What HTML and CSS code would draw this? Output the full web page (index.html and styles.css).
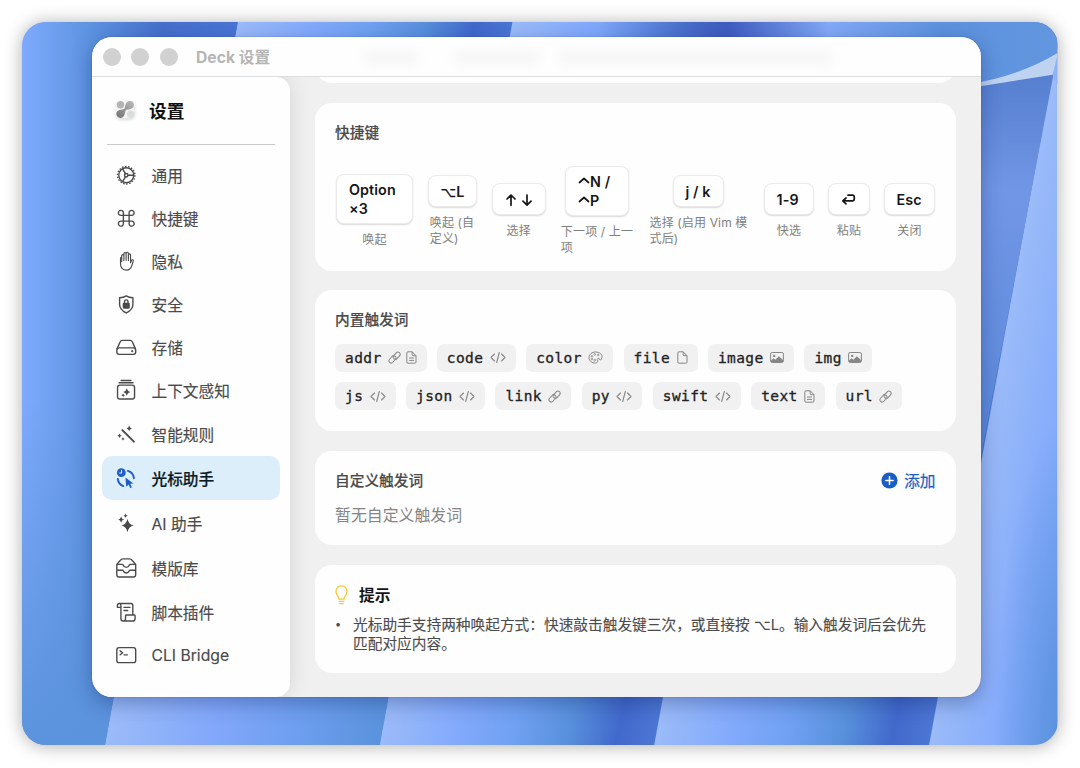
FILE: index.html
```html
<!DOCTYPE html>
<html lang="zh-CN">
<head>
<meta charset="utf-8">
<title>Deck 设置</title>
<link rel="stylesheet" href="styles.css">
</head>
<body>
<svg class="defs" width="0" height="0">
  <symbol id="i-link" viewBox="0 0 14 14"><g fill="none" stroke="currentColor" stroke-width="1.1" transform="rotate(-48 7 7)"><rect x="-.4" y="4.300" width="8.800" height="4.800" rx="2.400"/><rect x="5.600" y="5" width="8.800" height="4.800" rx="2.400"/></g></symbol>
  <symbol id="i-doc" viewBox="0 0 11 13"><path d="M2 .8h4.200L10 4.700V11a1.200 1.200 0 0 1-1.200 1.200H2A1.200 1.200 0 0 1 .8 11V2A1.200 1.200 0 0 1 2 .8zM6.200.8v3a.9.9 0 0 0 .9.9H10M3 7h5M3 9.400h5" fill="none" stroke="currentColor"/></symbol>
  <symbol id="i-file" viewBox="0 0 11 13"><path d="M2 .8h4.200L10 4.700V11a1.200 1.200 0 0 1-1.200 1.200H2A1.200 1.200 0 0 1 .8 11V2A1.200 1.200 0 0 1 2 .8zM6.200.8v3a.9.9 0 0 0 .9.9H10" fill="none" stroke="currentColor"/></symbol>
  <symbol id="i-code" viewBox="0 0 16 12"><path d="M4.500 2.500 1 6l3.500 3.500M11.500 2.500 15 6l-3.500 3.500M9.300 1 6.700 11" fill="none" stroke="currentColor" stroke-width="1.100" stroke-linecap="round" stroke-linejoin="round"/></symbol>
  <symbol id="i-image" viewBox="0 0 14 12"><rect x=".6" y="1" width="12.800" height="10" rx="1.600" fill="none" stroke="currentColor"/><circle cx="4.200" cy="4.400" r="1.200" fill="currentColor"/><path d="M1 10.500V9l2.500-2.200 1.800 1.400 3.500-3.400L13 8.500v2z" fill="currentColor"/></symbol>
  <symbol id="i-palette" viewBox="0 0 15 13"><path d="M10.600 7.300c-1.500.2-1.700 1-1.100 2 .7 1.100.1 2.500-1.800 2.700C3.800 12.300 1 9.800 1 6.700 1 3.300 4 1 7.600 1c3.700 0 6.400 2 6.400 4.600 0 1.900-.9 3.600-2 3.400-.9-.2-.4-1.900-1.400-1.700z" fill="none" stroke="currentColor"/><g fill="none" stroke="currentColor" stroke-width=".8"><circle cx="4" cy="5.300" r=".8"/><circle cx="6.800" cy="3.400" r=".8"/><circle cx="10.200" cy="4" r=".8"/><circle cx="3.900" cy="8" r=".8"/><circle cx="6.700" cy="9.200" r=".9"/></g></symbol>
</svg>

<div class="desktop">
  <svg class="wallpaper" viewBox="22 22 1036 723" preserveAspectRatio="none">
    <defs>
      <linearGradient id="bands" gradientUnits="userSpaceOnUse" x1="105" y1="745" x2="371" y2="794" spreadMethod="repeat">
        <stop offset="0" stop-color="#9bbbf8"/><stop offset=".27" stop-color="#83aafc"/><stop offset=".48" stop-color="#70a1f2"/><stop offset=".68" stop-color="#5890dc"/><stop offset=".86" stop-color="#4169cc"/><stop offset=".996" stop-color="#4c76d4"/><stop offset="1" stop-color="#9bbbf8"/>
      </linearGradient>
      <linearGradient id="first" gradientUnits="userSpaceOnUse" x1="105" y1="745" x2="371" y2="794">
        <stop offset="0" stop-color="#9bbbf8"/><stop offset=".38" stop-color="#83a8fb"/><stop offset=".7" stop-color="#6d9eef"/><stop offset="1" stop-color="#5a92dc"/>
      </linearGradient>
      <linearGradient id="left" gradientUnits="userSpaceOnUse" x1="22" y1="0" x2="238" y2="0"><stop offset="0" stop-color="#7faafd"/><stop offset=".33" stop-color="#5b92df"/><stop offset=".65" stop-color="#4670cc"/><stop offset="1" stop-color="#4a74d4"/></linearGradient>
      <linearGradient id="leftfoot" x1="0" y1="0" x2="0" y2="1"><stop offset="0" stop-color="#5b93dc" stop-opacity="0"/><stop offset="1" stop-color="#5b93dc"/></linearGradient>
      <linearGradient id="pane" x1="0" y1="0" x2="0" y2="1"><stop offset="0" stop-color="#567fd0"/><stop offset=".3" stop-color="#7196e5"/><stop offset="1" stop-color="#5a88da"/></linearGradient>
      <linearGradient id="corner" x1="0" x2="1"><stop offset="0" stop-color="#3f5cc0" stop-opacity="0"/><stop offset=".28" stop-color="#3f5cc0"/><stop offset=".5" stop-color="#82a9f7"/><stop offset=".75" stop-color="#5d92dd"/><stop offset="1" stop-color="#6296df"/></linearGradient>
      <radialGradient id="edge" gradientUnits="userSpaceOnUse" cx="0" cy="0" r="1" gradientTransform="translate(1070 745) scale(75 330)"><stop offset="0" stop-color="#568fda"/><stop offset="1" stop-color="#5a91dc" stop-opacity="0"/></radialGradient>
    </defs>
    <rect x="22" y="22" width="1036" height="723" fill="url(#bands)"/>
    <path d="M105 745L114 696H389L380 745z" fill="url(#first)"/>
    <path d="M22 22h216L105 745H22z" fill="url(#left)"/>
    <path d="M22 400h146L105 745H22z" fill="url(#leftfoot)"/>
    <path d="M600 22h458v34q-30 18-78 28H600z" fill="url(#corner)"/>
    <path d="M975 86l79-12-74 390z" fill="url(#pane)"/>
    <path d="M970 84q50-8 88-31v21l-88 14z" fill="#bdd3ef"/>
    <path d="M1053 75l5-20v30z" fill="#8fb3f8"/>
    <rect x="980" y="410" width="78" height="335" fill="url(#edge)"/>
  </svg>

  <div class="window">
    <header class="titlebar">
      <span class="dot"></span><span class="dot"></span><span class="dot"></span>
      <span class="title">Deck 设置</span>
      <span class="ghost ghost-a"></span><span class="ghost ghost-b"></span><span class="ghost ghost-c"></span>
    </header>

    <div class="body">
      <aside class="sidebar">
        <div class="brand">
          <svg width="26" height="26" viewBox="0 0 26 26">
            <defs><filter id="soft" x="-40%" y="-40%" width="180%" height="180%"><feGaussianBlur stdDeviation="1.500"/></filter>
            <linearGradient id="petal" x1="0" y1="1" x2="1" y2="0"><stop offset="0" stop-color="#6f6f6f"/><stop offset="1" stop-color="#bdbdbd"/></linearGradient></defs>
            <rect x="4" y="5" width="19" height="18" rx="5" fill="#d9dddc" filter="url(#soft)"/>
            <rect x="4" y="4" width="18" height="17" rx="5" fill="#f3f4f4"/>
            <circle cx="8.500" cy="7.800" r="3.700" fill="#b5b5b5"/>
            <path d="M13 10c.5-3.500 2.200-6 5-6 2.400 0 3.900 1.700 3.900 3.900 0 3.600-3.600 4.400-6.400 4.700-1.700.2-2 1-2.400 3-.5 3.300-2 5.400-4.600 5.400A4 4 0 0 1 4.400 17c0-3 2.600-4.100 5.600-4.400 2-.2 2.800-.8 3-2.600z" fill="url(#petal)"/>
            <circle cx="18.500" cy="17.200" r="3.600" fill="#d9dcdb"/>
          </svg>
          <span>设置</span>
        </div>
        <nav class="nav">
          <a class="item"><svg class="ico" viewBox="0 0 20 20"><circle cx="10" cy="10" r="7.300"/><circle cx="10" cy="10" r="8.500" stroke-width="1.300" stroke-linecap="butt" stroke-dasharray="1.500 1.467"/><circle cx="10" cy="10" r="1.700"/><path d="M11.700 10h5.500M9.200 8.500 6.400 3.700M9.200 11.500l-2.800 4.800"/></svg>通用</a>
          <a class="item"><svg class="ico" viewBox="0 0 20 20"><path d="M7.200 7.200h5.600v5.600H7.200zM7.200 7.200H4.900a2.450 2.450 0 1 1 2.300-2.400zM12.800 7.200V4.800a2.450 2.450 0 1 1 2.300 2.400zM12.800 12.800h2.300a2.450 2.450 0 1 1-2.300 2.400zM7.200 12.800v2.400a2.450 2.450 0 1 1-2.300-2.400z"/></svg>快捷键</a>
          <a class="item"><svg class="ico thin" viewBox="0 0 20 20"><path d="M5.600 10.500V4.600a1.050 1.050 0 0 1 2.100 0V9.200M7.700 9V2.700a1.100 1.100 0 0 1 2.200 0V9M9.900 9V2.300a1.100 1.100 0 0 1 2.200 0V9.200M12.100 9V3.900a1.050 1.050 0 0 1 2.100 0v7.500l1-2.300c.5-1 2-.7 1.700.6l-1.500 4.700c-.9 2.700-2.600 4.200-5.100 4.200-3.300 0-5.900-1.900-5.900-6V6.900a1 1 0 0 1 1.200-.9"/></svg>隐私</a>
          <a class="item"><svg class="ico" viewBox="0 0 20 20"><path d="M10 1.800c1.800 1.200 4.200 1.800 6.500 1.900v6.500c0 3.900-2.700 6.300-6.500 8.300-3.800-2-6.500-4.400-6.500-8.300V3.700C5.800 3.600 8.200 3 10 1.800z"/><rect x="7.200" y="9.200" width="5.600" height="4.400" rx=".6" class="solid"/><path d="M8.300 9V7.400a1.700 1.700 0 0 1 3.400 0V9"/></svg>安全</a>
          <a class="item"><svg class="ico" viewBox="0 0 20 20"><path d="M1 11.600 4 4.900q.6-1.600 2.200-1.600h7.600q1.600 0 2.200 1.600l3 6.700"/><rect x=".8" y="10.600" width="18.400" height="6.400" rx="2.300"/><circle cx="15.800" cy="13.800" r=".4"/></svg>存储</a>
          <a class="item"><svg class="ico" viewBox="0 0 20 20"><rect x="1.500" y="5" width="16.600" height="13.600" rx="2.300"/><path d="M3 2.700h13.600M5 .5h9.600" /><path class="solid" stroke="none" d="M10.500 8q.5 3 3.500 3.700-3 .7-3.500 3.700-.6-3-3.500-3.700 2.900-.7 3.500-3.700zM7 13.200q.3 1.300 1.700 1.700-1.400.4-1.700 1.700-.4-1.300-1.700-1.700 1.300-.4 1.700-1.700z"/></svg>上下文感知</a>
          <a class="item"><svg class="ico" viewBox="0 0 20 20"><path d="M6.200 6 17.500 17.200" stroke-width="1.900"/><path class="solid" stroke="none" d="M12.900 1.500q.4 2.300 2.600 2.800-2.200.5-2.600 2.800-.5-2.300-2.700-2.800 2.200-.5 2.700-2.800zM3.500 9.200q.4 1.800 2.100 2.200-1.700.4-2.100 2.200-.4-1.800-2.200-2.200 1.800-.4 2.200-2.200zM6.800 13q.3 1.300 1.600 1.600-1.300.3-1.600 1.600-.3-1.300-1.600-1.600 1.300-.3 1.600-1.600z"/></svg>智能规则</a>
          <a class="item active"><svg class="ico" viewBox="0 0 20 20"><circle cx="5.200" cy="4.600" r="4.300" class="solid" stroke="none"/><path d="M5.400 2.200v2.600H3.500" stroke="#dceefa" stroke-width="1"/><path d="M11.500 2.800q5.300 1.400 6 7.100M1.800 10.600q.5 5.200 5.300 7" stroke-width="1.900"/><path class="solid" stroke="none" d="M9.200 9.200 17 15l-3.100.4 1.600 3.500-1.500.8-1.700-3.600-2.300 2.100z"/></svg>光标助手</a>
          <a class="item"><svg class="ico" viewBox="0 0 20 20"><path class="solid" stroke="none" d="M11.200 5.500q1 5.600 6 6.600-5 1-6 6.600-1-5.600-6-6.600 5-1 6-6.600zM5 3.300q.5 2.600 3 3.100-2.500.5-3 3.100-.5-2.600-3-3.100 2.500-.5 3-3.100zM9.300.6q.3 1.700 2 2-1.700.3-2 2-.3-1.700-2-2 1.700-.3 2-2z"/></svg>AI 助手</a>
          <a class="item"><svg class="ico" viewBox="0 0 20 20"><path d="M.8 6.200v10.200q0 2.200 2.200 2.200h14q2.200 0 2.200-2.200V6.200L15.700 2.200q-1-1.300-2.700-1.300H7q-1.700 0-2.700 1.300zM.8 6.200h5.700c.5 0 .5 3 3.500 3s3-3 3.500-3h5.700M.8 12h5.800c.5 0 .4 2.600 3.400 2.600s2.900-2.600 3.400-2.600h5.800"/></svg>模版库</a>
          <a class="item"><svg class="ico" viewBox="0 0 20 20"><path d="M4.600 5.300H1.400V3.500q0-2.100 2-2.100h11q2 0 2 2v9.200M3.200 1.400q1.600.2 1.600 2.300v12.600q0 2.300 2.300 2.300H16q2.600 0 2.600-2.600v-2.600q0-.7-.8-.7H10q-.7 0-.7.7V16q0 2.600-2.200 2.600M7.800 5.300h5.800M7.800 8.300h3.600"/></svg>脚本插件</a>
          <a class="item"><svg class="ico" viewBox="0 0 20 20"><rect x=".8" y="2.600" width="18.400" height="14.600" rx="2.200"/><path d="M4 5.700l2.500 1.900L4 9.500M7.800 9.600h3.300"/></svg>CLI Bridge</a>
        </nav>
      </aside>

      <main class="content">
        <section class="card sliver"></section>

        <section class="card shortcuts">
          <h2>快捷键</h2>
          <div class="keys">
            <div class="combo w1"><kbd>Option<br>×3</kbd><small>唤起</small></div>
            <div class="combo w2"><kbd><span class="sym">⌥</span>L</kbd><small>唤起 (自<br>定义)</small></div>
            <div class="combo w3"><kbd><svg width="28" height="14" viewBox="0 0 28 14"><path d="M6 12.200V2.200M2 6 6 2l4 4M22 2v10M18 8.200l4 4 4-4"/></svg></kbd><small>选择</small></div>
            <div class="combo w4"><kbd><svg class="ctl" width="12" height="13" viewBox="0 0 12 13"><path d="M1.500 6.500 6 2.500l4.500 4"/></svg>N /<br><svg class="ctl" width="12" height="13" viewBox="0 0 12 13"><path d="M1.500 6.500 6 2.500l4.500 4"/></svg>P</kbd><small>下一项 / 上一<br>项</small></div>
            <div class="combo w5"><kbd>j / k</kbd><small>选择 (启用 Vim 模<br>式后)</small></div>
            <div class="combo w6"><kbd>1-9</kbd><small>快选</small></div>
            <div class="combo w7"><kbd><svg width="15" height="14" viewBox="0 0 15 14"><path d="M7 2.200h4.200Q13.300 2.200 13.300 4.300v1.500q0 2.100-2.100 2.100H2M5 5 1.800 7.900 5 10.900"/></svg></kbd><small>粘贴</small></div>
            <div class="combo w8"><kbd>Esc</kbd><small>关闭</small></div>
          </div>
        </section>

        <section class="card triggers">
          <h2>内置触发词</h2>
          <div class="tags">
            <span class="tag">addr<svg class="g13"><use href="#i-link"/></svg><svg class="g11"><use href="#i-doc"/></svg></span>
            <span class="tag">code<svg class="g16"><use href="#i-code"/></svg></span>
            <span class="tag">color<svg class="g15"><use href="#i-palette"/></svg></span>
            <span class="tag">file<svg class="g11"><use href="#i-file"/></svg></span>
            <span class="tag">image<svg class="g14"><use href="#i-image"/></svg></span>
            <span class="tag">img<svg class="g14"><use href="#i-image"/></svg></span>
            <span class="tag">js<svg class="g16"><use href="#i-code"/></svg></span>
            <span class="tag">json<svg class="g16"><use href="#i-code"/></svg></span>
            <span class="tag">link<svg class="g13"><use href="#i-link"/></svg></span>
            <span class="tag">py<svg class="g16"><use href="#i-code"/></svg></span>
            <span class="tag">swift<svg class="g16"><use href="#i-code"/></svg></span>
            <span class="tag">text<svg class="g11"><use href="#i-doc"/></svg></span>
            <span class="tag">url<svg class="g13"><use href="#i-link"/></svg></span>
          </div>
        </section>

        <section class="card custom">
          <div class="row">
            <h2>自定义触发词</h2>
            <a class="add"><svg width="17" height="17" viewBox="0 0 17 17"><circle cx="8.500" cy="8.500" r="8.100" fill="#1b5dc4"/><path d="M8.500 4.800v7.400M4.800 8.500h7.400" stroke="#fff" stroke-width="1.500" stroke-linecap="round"/></svg>添加</a>
          </div>
          <p class="empty">暂无自定义触发词</p>
        </section>

        <section class="card tips">
          <h3><svg width="13" height="20" viewBox="0 0 13 20"><path d="M4 14.200C4 11.300 1 10 1 6.300a5.500 5.500 0 0 1 11 0c0 3.700-3 5-3 7.900zM4.200 16.400h4.600M4.800 18.600h3.400" fill="none" stroke="#f6c92f" stroke-width="1.300" stroke-linecap="round" stroke-linejoin="round"/></svg>提示</h3>
          <div class="tip"><span class="bullet">•</span><p>光标助手支持两种唤起方式：快速敲击触发键三次，或直接按 <span class="sym">⌥</span>L。输入触发词后会优先<br>匹配对应内容。</p></div>
        </section>
      </main>
    </div>
  </div>
</div>
</body>
</html>
```
FILE: styles.css
```css
* { box-sizing: border-box; }
body {
  margin: 0;
  width: 1080px;
  height: 768px;
  padding: 22px 22.500px 23px 22px;
  overflow: hidden;
  background: #fff;
  font-family: Inter, "Noto Sans CJK SC", sans-serif;
  color: #4a4a4a;
}
.defs { position: absolute; }
h2, h3, p { margin: 0; }

.desktop {
  position: relative;
  height: 723px;
  padding: 15px 77px 48px 70px;
  border-radius: 24px;
  box-shadow: 0 1px 18px rgba(0, 0, 0, .32);
}
.wallpaper {
  position: absolute;
  inset: 0;
  width: 100%;
  height: 100%;
  border-radius: 24px;
}
.window {
  position: relative;
  display: flex;
  flex-direction: column;
  height: 660px;
  border-radius: 20px;
  overflow: hidden;
  background: #f0f0f0;
  box-shadow: 0 0 1px rgba(0, 0, 0, .5), 0 6px 20px rgba(10, 30, 90, .34);
}

.titlebar {
  position: relative;
  display: flex;
  align-items: center;
  flex: none;
  height: 40px;
  padding-left: 10.500px;
  gap: 10.500px;
  background: #fefefe;
  border-bottom: 1px solid #dedede;
}
.dot { width: 18px; height: 18px; border-radius: 50%; background: #d1d1d1; }
.title { margin-left: 8px; font-size: 15.700px; font-weight: 700; color: #b5b5b5; }
.ghost {
  position: absolute;
  top: 14px;
  height: 14px;
  border-radius: 7px;
  background: rgba(0, 0, 0, .035);
  filter: blur(6px);
}
.ghost-a { left: 272px; width: 55px; }
.ghost-b { left: 362px; width: 86px; }
.ghost-c { left: 466px; width: 275px; }

.body { display: flex; flex: 1; min-height: 0; }
.sidebar {
  flex: none;
  width: 198px;
  background: #fefefe;
  border-radius: 0 14px 14px 0;
  box-shadow: 0 0 22px rgba(0, 0, 0, .12);
}
.brand {
  display: flex;
  align-items: center;
  gap: 11px;
  height: 68px;
  margin: 0 15px;
  padding: 0 0 1px 5px;
  border-bottom: 1px solid #c9c9c9;
  font-size: 17.700px;
  font-weight: 700;
  color: #111;
}
.nav {
  display: grid;
  grid-template-rows: 43px 43px 43px 42.500px 43px 43.500px 44px 44px 46px 44.500px 44px 42px;
  padding: 9px 10px 0;
}
.item {
  display: flex;
  align-items: center;
  gap: 15px;
  padding-left: 14px;
  border-radius: 10px;
  font-size: 15.700px;
  -webkit-text-stroke: .15px currentColor;
}
.item.active { background: #dceefa; color: #0d1a26; font-weight: 500; -webkit-text-stroke: .2px currentColor; }
.ico {
  width: 20.500px;
  height: 20.500px;
  overflow: visible;
  fill: none;
  stroke: #4a4a4a;
  stroke-width: 1.350;
  stroke-linecap: round;
  stroke-linejoin: round;
}
.ico.thin { stroke-width: 1.100; }
.ico .solid { fill: #4a4a4a; }
.active .ico { stroke: #1d5fc6; }
.active .ico .solid { fill: #1d5fc6; }

.content {
  flex: 1;
  display: flex;
  flex-direction: column;
  padding: 0 25px;
  overflow: hidden;
}
.card {
  flex: none;
  padding: 0 20px;
  margin-bottom: 20px;
  border-radius: 17px;
  background: #fefefe;
}
.card h2 { font-size: 14.700px; line-height: 20px; font-weight: 500; -webkit-text-stroke: .15px currentColor; }
.sliver { height: 40px; margin-top: -34px; }
.shortcuts { height: 168px; padding-top: 20px; margin-bottom: 19px; }
.triggers { height: 140.500px; padding-top: 20px; }
.custom { height: 94.500px; padding-top: 20px; }
.tips { height: 107.500px; padding-top: 19.500px; }

.keys {
  display: flex;
  align-items: center;
  height: 90px;
  margin: 23px -8px 0 1px;
}
.combo { flex: none; display: flex; flex-direction: column; align-items: center; gap: 8px; }
.w1 { width: 77px; margin-right: 14.500px; }
.w2 { width: 49px; margin-right: 15px; }
.w3 { width: 54.500px; margin-right: 14px; }
.w4 { width: 74px; margin-right: 14px; }
.w5 { width: 101px; margin-right: 15px; }
.w6 { width: 50px; margin-right: 14px; }
.w7 { width: 42px; margin-right: 14px; }
.w8 { width: 51px; }
kbd {
  padding: 6.500px 0 5px 12px;
  border: 1px solid #ebebeb;
  border-radius: 8px;
  background: #fff;
  box-shadow: 0 1px 1.500px rgba(0, 0, 0, .14);
  font: 600 14.300px/18.500px Inter, "DejaVu Sans", sans-serif;
  letter-spacing: .1px;
  color: #161616;
  white-space: nowrap;
  text-align: left;
}
.w1 kbd { width: 77px; }
.w2 kbd { width: 49px; }
.w3 kbd { width: 54.500px; }
.w4 kbd { width: 64px; }
.w5 kbd { width: 51px; padding-left: 11.500px; }
.w6 kbd { width: 50px; padding-left: 11.500px; }
.w7 kbd { width: 42px; }
.w8 kbd { width: 51px; padding-left: 11.500px; }
kbd svg { vertical-align: -2px; fill: none; stroke: #161616; stroke-width: 1.700; stroke-linecap: round; stroke-linejoin: round; }
.sym { font-family: "DejaVu Sans", sans-serif; }
kbd .sym { font-size: 13.500px; font-weight: 400; -webkit-text-stroke: .3px currentColor; }
small { font-size: 12px; line-height: 16px; color: #808080; white-space: nowrap; letter-spacing: .15px; }

.tags { display: flex; flex-wrap: wrap; gap: 10.500px 10.300px; margin-top: 13.500px; }
.tag {
  display: flex;
  align-items: center;
  height: 28px;
  padding: 0 10px;
  gap: 6.500px;
  border-radius: 7px;
  background: #f1f1f1;
  font: 400 14.500px "DejaVu Sans Mono", monospace;
  letter-spacing: .4px;
  -webkit-text-stroke: .3px #222;
  color: #222;
}
.tag svg { color: #868686; flex: none; height: 13px; }
.tag svg + svg { margin-left: -2px; }
.g11 { width: 11px; }
.g13 { width: 13px; }
.g14 { width: 14px; }
.g15 { width: 15px; }
.g16 { width: 16px; }

.row { display: flex; justify-content: space-between; align-items: center; height: 20px; }
.add { display: flex; align-items: center; gap: 6px; font-size: 15.700px; color: #1b5dc4; -webkit-text-stroke: .2px currentColor; }
.empty { margin-top: 14px; font-size: 15.900px; line-height: 22px; color: #858585; }

.tips h3 { display: flex; align-items: center; gap: 11px; height: 20px; font-size: 15.700px; font-weight: 600; color: #161616; }
.tip { display: flex; margin-top: 10.500px; font-size: 14.700px; line-height: 19px; -webkit-text-stroke: .1px currentColor; }
.bullet { width: 18px; font-size: 11px; }
.tip p { white-space: nowrap; }
```
